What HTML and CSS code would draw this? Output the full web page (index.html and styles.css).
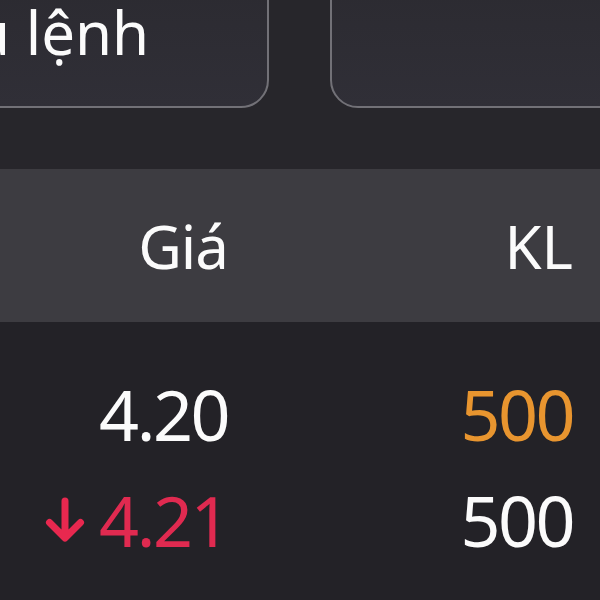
FILE: index.html
```html
<!DOCTYPE html>
<html lang="vi">
<head>
<meta charset="utf-8">
<link rel="stylesheet" href="styles.css">
</head>
<body>
<div class="screen">
  <section class="actions">
    <div class="card card-left"><span class="card-label">u lệnh</span></div>
    <div class="card card-right"></div>
  </section>
  <div class="table-head">
    <div class="cell">Giá</div>
    <div class="cell">KL</div>
  </div>
  <div class="table-body">
    <div class="row">
      <div class="cell price">4.20</div>
      <div class="cell vol vol-orange">500</div>
    </div>
    <div class="row">
      <div class="cell price price-down">
        <svg class="arrow" width="40" height="46" viewBox="0 0 40 46" aria-hidden="true">
          <path d="M20 4 V40 M4.5 25.5 L20 41 L35.5 25.5" fill="none" stroke="currentColor" stroke-width="7" stroke-linecap="round" stroke-linejoin="round"/>
        </svg>
        <span>4.21</span>
      </div>
      <div class="cell vol">500</div>
    </div>
  </div>
</div>
</body>
</html>
```

FILE: styles.css
```css
html, body {
  margin: 0;
  padding: 0;
  background: #232227;
}

.screen {
  width: 600px;
  height: 600px;
  overflow: hidden;
  font-family: "Noto Sans", "Open Sans", sans-serif;
  color: #fbfbfb;
}

.actions {
  height: 169px;
  background: #27262b;
  display: flex;
  gap: 61px;
  overflow: hidden;
}

.card {
  flex: none;
  width: 330px;
  height: 141px;
  margin-top: -33px;
  box-sizing: border-box;
  border: 2px solid #727177;
  border-radius: 28px;
  background: linear-gradient(180deg, #2b2a30 0%, #302f37 100%);
}

.card-left {
  margin-left: -61px;
  padding: 33px 0 0 32px;
}

.card-label {
  display: block;
  font-size: 60px;
  line-height: 60px;
  white-space: nowrap;
}

.table-head {
  height: 153px;
  background: #3d3c41;
  display: grid;
  grid-template-columns: 228px 345px;
  align-items: center;
  font-size: 60px;
  line-height: 60px;
}

.table-head .cell:first-child {
  letter-spacing: -1px;
}

.cell {
  text-align: right;
}

.table-body {
  padding-top: 39px;
}

.row {
  display: grid;
  grid-template-columns: 228px 345px;
  padding: 18px 0;
  font-size: 70px;
  line-height: 70px;
  letter-spacing: -2.5px;
}

.price {
  display: flex;
  justify-content: flex-end;
  align-items: center;
  gap: 14px;
}

.price-down {
  color: #e02a50;
}

.arrow {
  display: block;
  color: #e8284f;
}

.vol-orange {
  color: #e8952f;
}
```
